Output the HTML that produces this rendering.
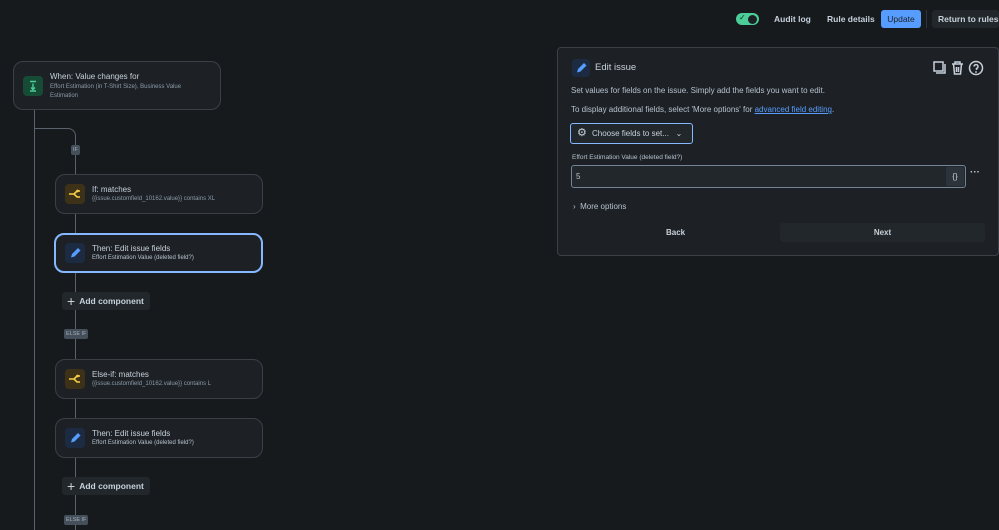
<!DOCTYPE html>
<html><head><meta charset="utf-8"><style>
*{box-sizing:border-box;margin:0;padding:0}
body{width:999px;height:530px;background:#161a1d;font-family:"Liberation Sans",sans-serif;color:#c7d1db;position:relative;overflow:hidden}
.a{position:absolute;white-space:nowrap}
.card{position:absolute;background:#1d2125;border:1px solid #3b4047;border-radius:10px}
.ic{position:absolute;width:20px;height:20px;border-radius:4px}
.t{position:absolute;font-size:8px;color:#c7d1db;white-space:nowrap}
.s{position:absolute;font-size:6px;color:#8c9bab;white-space:nowrap}
.vl{position:absolute;width:1px;background:#5a636d}
.badge{position:absolute;background:#454f59;color:#9fadbc;font-size:5.5px;padding:2px 2px;border-radius:2px;line-height:6px}
.add{position:absolute;background:#22272b;border-radius:3px;font-size:8.5px;font-weight:bold;color:#c7d1db;padding:0 6px 0 5px;height:18px;line-height:18px;white-space:nowrap}
.add b{font-size:14px;font-weight:normal;vertical-align:-2px;margin-right:4px}
.p{position:absolute;font-size:8px;color:#b6c2cf;white-space:nowrap}
</style></head><body>
<svg width="0" height="0" style="position:absolute"><defs>
<symbol id="pen" viewBox="0 0 20 20"><path d="M6 14.5l1-3.5 6-6 2.5 2.5-6 6z" fill="#579dff"/></symbol>
<symbol id="br" viewBox="0 0 20 20" fill="none" stroke="#f5cd47" stroke-width="1.6"><path d="M4 10h5M9 10l3-3h3M9 10l3 3h3"/><circle cx="12.5" cy="7" r=".6"/></symbol>
</defs></svg>
<!-- top bar -->
<div class="a" style="left:736px;top:13px;width:23px;height:12px;border-radius:6px;background:#4bce97"></div>
<div class="a" style="left:748px;top:15px;width:9px;height:9px;border-radius:50%;background:#1d2125"></div>
<div class="a" style="left:739px;top:13px;font-size:8px;color:#1d2125">✓</div>
<div class="p" style="left:774px;top:14px;font-size:8.5px;font-weight:bold;color:#c7d1db">Audit log</div>
<div class="p" style="left:827px;top:14px;font-size:8.5px;font-weight:bold;color:#c7d1db">Rule details</div>
<div class="a" style="left:881px;top:10px;width:40px;height:18px;background:#579dff;border-radius:3px;font-size:8.5px;color:#1d2125;text-align:center;line-height:18px">Update</div>
<div class="a" style="left:926px;top:10px;width:1px;height:18px;background:#2c333a"></div>
<div class="a" style="left:932px;top:10px;width:67px;height:18px;background:#22272b;border-radius:3px;font-size:8.5px;font-weight:bold;color:#c7d1db;line-height:18px;padding-left:6px">Return to rules</div>

<!-- flow lines -->
<div class="vl" style="left:34px;top:110px;height:420px"></div>
<div class="a" style="left:34px;top:128px;width:42px;height:30px;border-top:1px solid #5a636d;border-right:1px solid #5a636d;border-top-right-radius:8px"></div>
<div class="vl" style="left:75px;top:150px;height:380px"></div>

<div class="card" style="left:13px;top:61px;width:208px;height:49px"></div>
<div class="ic" style="left:23px;top:76px;background:#164b35"></div>
<svg class="a" style="left:23px;top:76px" width="20" height="20" viewBox="0 0 20 20" fill="none" stroke="#4bce97" stroke-width="1.4"><path d="M7 5.5h6M10 7.5v6M8 11.5l2 2 2-2M7 15h6"/></svg>
<div class="t" style="left:50px;top:72px">When: Value changes for</div>
<div class="s" style="left:50px;top:83px;line-height:9px;white-space:normal;width:150px">Effort Estimation (in T-Shirt Size), Business Value Estimation</div>

<div class="badge" style="left:71px;top:145px">IF</div>

<div class="card" style="left:55px;top:174px;width:208px;height:40px"></div>
<div class="ic" style="left:65px;top:184px;background:#3d3117"></div>
<svg class="a" style="left:65px;top:184px" width="20" height="20"><use href="#br"/></svg>
<div class="t" style="left:92px;top:185px">If: matches</div>
<div class="s" style="left:92px;top:196px">{{issue.customfield_10162.value}} contains XL</div>

<div class="card" style="left:54px;top:233px;width:209px;height:40px;border:2px solid #85b8ff"></div>
<div class="ic" style="left:65px;top:243px;background:#1c2b41"></div>
<svg class="a" style="left:65px;top:243px" width="20" height="20"><use href="#pen"/></svg>
<div class="t" style="left:92px;top:244px">Then: Edit issue fields</div>
<div class="s" style="left:92px;top:255px;color:#b6c2cf">Effort Estimation Value (deleted field?)</div>

<div class="add" style="left:62px;top:292px"><b>+</b>Add component</div>
<div class="badge" style="left:64px;top:329px">ELSE IF</div>

<div class="card" style="left:55px;top:359px;width:208px;height:40px"></div>
<div class="ic" style="left:65px;top:369px;background:#3d3117"></div>
<svg class="a" style="left:65px;top:369px" width="20" height="20"><use href="#br"/></svg>
<div class="t" style="left:92px;top:370px">Else-if: matches</div>
<div class="s" style="left:92px;top:381px">{{issue.customfield_10162.value}} contains L</div>

<div class="card" style="left:55px;top:418px;width:208px;height:40px"></div>
<div class="ic" style="left:65px;top:428px;background:#1c2b41"></div>
<svg class="a" style="left:65px;top:428px" width="20" height="20"><use href="#pen"/></svg>
<div class="t" style="left:92px;top:429px">Then: Edit issue fields</div>
<div class="s" style="left:92px;top:440px;color:#b6c2cf">Effort Estimation Value (deleted field?)</div>

<div class="add" style="left:62px;top:477px"><b>+</b>Add component</div>
<div class="badge" style="left:64px;top:515px">ELSE IF</div>

<!-- right panel -->
<div class="card" style="left:557px;top:47px;width:442px;height:209px;border-radius:4px"></div>
<div class="a" style="left:572px;top:59px;width:18px;height:18px;border-radius:4px;background:#1c2b41"></div>
<svg class="a" style="left:571px;top:58px" width="20" height="20"><use href="#pen"/></svg>
<div class="p" style="left:595px;top:62px;font-size:9.5px;color:#c7d1db">Edit issue</div>
<svg class="a" style="left:932px;top:60px" width="52" height="16" viewBox="0 0 52 16" fill="none" stroke="#c7d1db" stroke-width="1.5">
<rect x="2" y="2" width="9" height="9"/><path d="M4 13h9V4"/>
<path d="M20 4h11M23 4V2h5v2M21.5 4l1 10h6l1-10M24.5 7v5M26.5 7v5"/>
<circle cx="44" cy="8" r="6.5"/><path d="M42 6.5a2 2 0 1 1 2.5 2v1.5"/><circle cx="44" cy="12" r=".3"/>
</svg>
<div class="p" style="left:571px;top:86px">Set values for fields on the issue. Simply add the fields you want to edit.</div>
<div class="p" style="left:571px;top:105px">To display additional fields, select 'More options' for <span style="color:#579dff;text-decoration:underline">advanced field editing</span>.</div>
<div class="a" style="left:570px;top:123px;width:123px;height:21px;border:1.5px solid #85b8ff;border-radius:3px;background:#22272b"></div>
<div class="a" style="left:577px;top:126px;font-size:11px;color:#c7d1db">⚙</div>
<div class="p" style="left:592px;top:129px;color:#c7d1db">Choose fields to set...&nbsp;&nbsp;&nbsp;⌄</div>
<div class="p" style="left:572px;top:154px;font-size:6.5px">Effort Estimation Value (deleted field?)</div>
<div class="a" style="left:571px;top:165px;width:395px;height:23px;border:1px solid #738496;border-radius:3px;background:#22272b"></div>
<div class="p" style="left:576px;top:172px">5</div>
<div class="a" style="left:946px;top:167px;width:18px;height:19px;background:#2c333a;border-radius:2px;font-size:8px;text-align:center;line-height:19px;color:#c7d1db">{}</div>
<div class="p" style="left:970px;top:167px;font-size:10px;font-weight:bold">···</div>
<div class="p" style="left:573px;top:202px">›&nbsp;&nbsp;More options</div>
<div class="p" style="left:666px;top:228px;font-weight:bold;color:#c7d1db">Back</div>
<div class="a" style="left:780px;top:223px;width:205px;height:19px;background:#22272b;border-radius:3px;font-size:8px;font-weight:bold;text-align:center;line-height:19px;color:#c7d1db">Next</div>
</body></html>
